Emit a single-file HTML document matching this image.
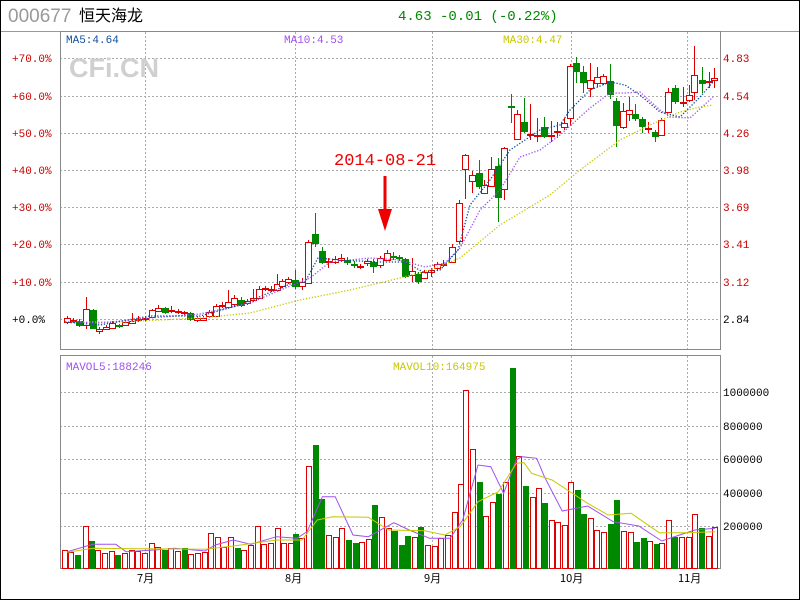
<!DOCTYPE html>
<html><head><meta charset="utf-8"><style>
html,body{margin:0;padding:0;background:#fff}
#w{position:relative;width:798px;height:598px;border:1px solid #000;overflow:hidden;font-family:"Liberation Mono","Noto Sans CJK SC",monospace}
</style></head><body><div id="w">
<svg id="s" width="798" height="598" viewBox="1 1 798 598" xmlns="http://www.w3.org/2000/svg" font-family="Liberation Mono, monospace">
<text x="8" y="22" style="font-family:'Liberation Sans',sans-serif;font-size:19px" fill="#999">000677</text>
<text x="79" y="21" style="font-family:'Noto Sans CJK SC',sans-serif;font-size:16px" fill="#000">恒天海龙</text>
<text x="398" y="20" font-size="14" fill="#008800">4.63 -0.01 (-0.22%)</text>
<line x1="0" y1="31.5" x2="800" y2="31.5" stroke="#999"/>
<g stroke="#aaa" stroke-dasharray="2,2" stroke-width="1">
<line x1="60" y1="58.5" x2="720" y2="58.5"/><line x1="60" y1="96.5" x2="720" y2="96.5"/><line x1="60" y1="133.5" x2="720" y2="133.5"/><line x1="60" y1="170.5" x2="720" y2="170.5"/><line x1="60" y1="207.5" x2="720" y2="207.5"/><line x1="60" y1="244.5" x2="720" y2="244.5"/><line x1="60" y1="282.5" x2="720" y2="282.5"/><line x1="60" y1="319.5" x2="720" y2="319.5"/>
<line x1="145.5" y1="32" x2="145.5" y2="349"/><line x1="295.5" y1="32" x2="295.5" y2="349"/><line x1="432.5" y1="32" x2="432.5" y2="349"/><line x1="571.5" y1="32" x2="571.5" y2="349"/><line x1="687.5" y1="32" x2="687.5" y2="349"/>
<line x1="60" y1="392.5" x2="720" y2="392.5"/><line x1="60" y1="426.5" x2="720" y2="426.5"/><line x1="60" y1="459.5" x2="720" y2="459.5"/><line x1="60" y1="493.5" x2="720" y2="493.5"/><line x1="60" y1="526.5" x2="720" y2="526.5"/>
<line x1="145.5" y1="356" x2="145.5" y2="568"/><line x1="295.5" y1="356" x2="295.5" y2="568"/><line x1="432.5" y1="356" x2="432.5" y2="568"/><line x1="571.5" y1="356" x2="571.5" y2="568"/><line x1="687.5" y1="356" x2="687.5" y2="568"/>
</g>
<rect x="60.5" y="31.5" width="660" height="318" fill="none" stroke="#888"/>
<rect x="60.5" y="355.5" width="660" height="213" fill="none" stroke="#888"/>
<text x="69" y="77" style="font-family:'Liberation Sans',sans-serif;font-weight:bold;font-size:27px" fill="#d0d0d0">CFi.CN</text>
<text x="66" y="43" font-size="11" fill="#104f9c">MA5:4.64</text>
<text x="284" y="43" font-size="11" fill="#a050f0">MA10:4.53</text>
<text x="503" y="43" font-size="11" fill="#c8c800">MA30:4.47</text>
<text x="66" y="370" font-size="11" fill="#a050f0">MAVOL5:188246</text>
<text x="393" y="370" font-size="11" fill="#c8c800">MAVOL10:164975</text>
<g font-size="11" fill="#cc0000">
<text x="12" y="62">+70.0%</text><text x="12" y="100">+60.0%</text><text x="12" y="137">+50.0%</text><text x="12" y="174">+40.0%</text><text x="12" y="211">+30.0%</text><text x="12" y="248">+20.0%</text><text x="12" y="286">+10.0%</text>
<text x="723" y="62">4.83</text><text x="723" y="100">4.54</text><text x="723" y="137">4.26</text><text x="723" y="174">3.98</text><text x="723" y="211">3.69</text><text x="723" y="248">3.41</text><text x="723" y="286">3.12</text>
</g>
<text x="12" y="323" font-size="11" fill="#000">+0.0%</text>
<text x="723" y="323" font-size="11" fill="#000">2.84</text>
<g font-size="11" fill="#000">
<text x="723" y="396">1000000</text><text x="723" y="430">800000</text><text x="723" y="463">600000</text><text x="723" y="497">400000</text><text x="723" y="530">200000</text>
<text x="137" y="582" style="font-family:'Noto Sans CJK SC',sans-serif">7月</text><text x="285" y="582" style="font-family:'Noto Sans CJK SC',sans-serif">8月</text><text x="424" y="582" style="font-family:'Noto Sans CJK SC',sans-serif">9月</text><text x="560" y="582" style="font-family:'Noto Sans CJK SC',sans-serif">10月</text><text x="678" y="582" style="font-family:'Noto Sans CJK SC',sans-serif">11月</text>
</g>
<text x="334" y="165" font-size="17" fill="#ee0000">2014-08-21</text>
<line x1="385" y1="176" x2="385" y2="214" stroke="#ee0000" stroke-width="3"/>
<polygon points="378,209 392,209 385,231" fill="#ee0000"/>
<g id="c"></g>
</svg></div>
<script>
var s=document.getElementById('c'),h='';
var C=[[67,'r',318,322,316,324],[73,'r',320,321,318,323],[79,'g',321,326,319,327],[86,'r',309,325,297,329],[93,'g',310,329,309,329],[99,'r',329,331,327,334],[106,'r',327,329,325,330],[112,'r',323,328,321,328],[119,'g',325,327,324,328],[125,'r',322,325,320,326],[132,'r',321,323,313,324],[138,'r',319,320,316,322],[145,'r',318,319,317,321],[152,'r',310,317,309,318],[158,'r',308,311,305,312],[165,'g',308,313,307,314],[171,'r',310,311,306,313],[178,'r',311,312,309,314],[184,'r',312,313,311,315],[190,'g',313,320,312,321],[197,'r',318,320,316,322],[203,'r',318,320,316,321],[209,'r',312,316,310,318],[216,'r',306,316,304,317],[222,'r',305,306,302,308],[228,'r',302,307,290,308],[234,'r',298,304,295,306],[241,'g',300,306,297,307],[247,'r',301,303,299,305],[253,'r',298,300,289,302],[259,'r',289,298,286,299],[265,'r',288,289,286,291],[271,'r',289,290,286,292],[277,'r',284,290,274,291],[282,'r',281,286,279,288],[288,'r',279,282,277,284],[295,'g',280,287,270,289],[302,'r',282,286,278,290],[308,'r',242,283,240,284],[315,'g',234,244,213,247],[322,'g',251,263,247,264],[328,'r',261,262,258,268],[335,'r',259,262,256,264],[341,'r',258,260,254,262],[347,'g',260,263,257,265],[354,'g',264,266,261,268],[360,'r',266,267,264,269],[367,'r',261,263,259,266],[373,'g',262,267,259,273],[380,'r',258,265,256,268],[387,'r',253,260,250,261],[393,'g',256,258,252,260],[399,'g',257,258,255,261],[405,'g',259,277,258,278],[412,'r',271,275,258,282],[418,'g',274,282,272,284],[424,'r',272,278,270,279],[431,'r',270,272,268,277],[437,'r',264,268,262,271],[443,'r',264,265,260,267],[452,'r',247,262,244,263],[459,'r',203,241,200,243],[465,'r',155,169,154,199],[472,'r',175,181,171,193],[479,'g',173,187,160,189],[484,'r',185,193,180,194],[491,'r',169,186,157,187],[498,'g',166,198,158,222],[504,'r',148,189,147,200],[511,'g',106,107,94,123],[517,'r',114,139,110,140],[524,'g',122,132,98,133],[530,'r',134,135,104,140],[537,'r',135,136,118,142],[544,'g',127,137,117,138],[551,'r',135,136,121,142],[557,'r',131,132,122,138],[564,'r',123,127,118,130],[570,'r',66,118,64,126],[576,'g',63,72,57,83],[583,'g',72,83,66,93],[590,'r',80,88,63,97],[597,'r',77,83,67,87],[603,'r',76,83,74,85],[610,'g',81,95,64,99],[616,'g',101,126,98,147],[623,'r',111,127,103,129],[629,'r',110,114,97,121],[635,'g',114,119,104,121],[642,'g',119,127,117,133],[648,'r',128,129,122,133],[655,'g',132,137,130,142],[661,'r',120,135,118,136],[668,'r',92,112,88,113],[675,'g',88,102,85,104],[683,'r',102,103,87,107],[689,'r',95,100,85,102],[694,'r',75,92,46,100],[702,'g',80,84,67,93],[709,'r',81,82,72,88],[714,'r',78,80,68,88]];
C.forEach(function(c){var x=c[0],col=c[1]=='r'?'#dd0000':'#008800';
h+='<line x1="'+(x+.5)+'" y1="'+c[4]+'" x2="'+(x+.5)+'" y2="'+c[5]+'" stroke="'+col+'"/>';
var hh=Math.max(c[3]-c[2],1);
if(c[1]=='r'){ if(hh<=1)h+='<rect x="'+(x-3)+'" y="'+c[2]+'" width="7" height="2" fill="'+col+'"/>';else h+='<rect x="'+(x-2.5)+'" y="'+(c[2]+.5)+'" width="6" height="'+hh+'" fill="#fff" stroke="'+col+'"/>';}
else h+='<rect x="'+(x-3)+'" y="'+c[2]+'" width="7" height="'+Math.max(hh,2)+'" fill="'+col+'"/>';});
function pl(p,col,dash,sx,sy,ox,oy){var q=[];for(var i=0;i<p.length;i+=2)q.push((p[i]*sx+ox).toFixed(1)+','+(p[i+1]*sy+oy).toFixed(1));return '<polyline points="'+q.join(' ')+'" fill="none" stroke="'+col+'" stroke-width="'+(dash?1.3:1)+'" '+(dash?'stroke-dasharray="1.3,1.7"':'')+'/>';}
h+=pl([65,322,120,322,200,318,250,313,300,300,350,290,400,278,430,270,460,258,500,225,550,195,580,170,620,140,650,125,680,112,700,107,713,105],'#c8c800',1,1,1,0,0);
h+=pl([65,322,100,323,150,318,200,314,250,303,290,286,310,278,330,262,370,258,400,260,425,267,445,263,460,248,480,210,500,190,520,157,540,150,560,135,590,108,610,93,625,93,640,92,660,110,670,117,690,118,713,97],'#a050f0',1,1,1,0,0);
h+=pl([65,322,100,325,150,316,200,316,240,305,290,284,305,282,318,258,340,260,380,262,405,262,425,273,440,270,458,250,470,205,490,180,510,150,540,130,560,125,570,110,590,90,610,82,625,85,640,95,660,112,680,117,700,97,713,82],'#104f9c',1,1,1,0,0);
var V=[[125,'r',600],[138,'r',607],[151,'g',615],[166,'r',528],[178,'g',573],[191,'r',600],[204,'r',610],[217,'r',603],[230,'g',615],[243,'r',608],[256,'r',600],[269,'r',603],[282,'r',608],[295,'r',580],[308,'r',592],[321,'g',600],[334,'r',595],[347,'r',603],[360,'g',595],[373,'r',612],[386,'r',610],[399,'r',605],[412,'r',550],[425,'r',560],[438,'r',590],[451,'r',560],[464,'g',595],[477,'r',600],[490,'r',585],[503,'r',528],[516,'r',582],[529,'r',578],[542,'r',535],[555,'r',578],[568,'r',578],[578,'g',552],[590,'r',565],[604,'r',348],[617,'g',285],[630,'g',447],[643,'r',555],[656,'r',560],[669,'r',535],[682,'g',570],[695,'g',578],[708,'r',575],[721,'r',568],[734,'g',465],[747,'r',502],[760,'r',535],[772,'g',542],[785,'g',585],[798,'g',558],[811,'r',562],[824,'g',532],[837,'r',585],[850,'r',588],[863,'r',565],[876,'r',555],[889,'r',487],[902,'r',402],[912,'r',120],[925,'r',298],[938,'g',396],[951,'r',498],[964,'r',455],[977,'g',432],[990,'r',395],[1003,'g',55],[1016,'r',318],[1029,'g',408],[1042,'r',440],[1055,'r',415],[1066,'g',460],[1079,'r',510],[1092,'r',516],[1105,'r',525],[1118,'r',397],[1131,'g',420],[1143,'g',492],[1156,'r',505],[1169,'r',540],[1182,'r',545],[1195,'g',522],[1208,'g',450],[1221,'r',543],[1234,'r',546],[1247,'g',576],[1260,'g',565],[1273,'r',573],[1286,'g',582],[1296,'r',579],[1309,'r',510],[1322,'g',562],[1335,'r',560],[1348,'r',560],[1361,'r',492],[1374,'g',535],[1387,'r',558],[1400,'r',532]];
V.forEach(function(v){var x=Math.round(v[0]/1.96)+1,y=Math.round(350+v[2]/3);
if(v[1]=='r')h+='<rect x="'+(x-2.5)+'" y="'+(y+.5)+'" width="5" height="'+(568-y)+'" fill="#fff" stroke="#dd0000"/>';
else h+='<rect x="'+(x-3)+'" y="'+y+'" width="6" height="'+(569-y)+'" fill="#008800"/>';});
h+=pl([130,605,180,583,225,583,245,605,300,600,340,595,400,603,420,585,455,570,490,583,540,560,580,565,600,545,630,440,655,440,690,555,720,560,770,518,800,540,840,565,880,565,905,510,935,345,960,350,985,430,1010,330,1020,320,1050,325,1065,380,1100,483,1150,468,1200,515,1250,528,1295,573,1330,555,1360,540,1400,535],'#a050f0',0,1/1.96,1/3,1,350);
h+=pl([130,607,180,595,400,598,460,587,540,570,590,570,620,510,650,500,720,502,760,540,830,542,870,555,900,530,935,455,975,425,1010,340,1025,338,1040,370,1080,390,1150,460,1190,495,1235,490,1290,548,1340,548,1400,545],'#c8c800',0,1/1.96,1/3,1,350);
s.innerHTML=h;
</script>
</body></html>
